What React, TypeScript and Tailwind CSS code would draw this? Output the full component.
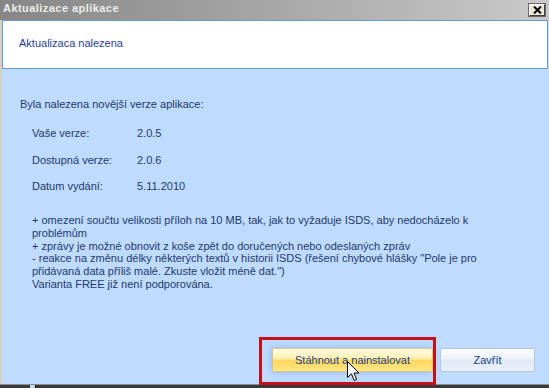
export default function App() {
  const rows = [
    ["Vaše verze:", "2.0.5"],
    ["Dostupná verze:", "2.0.6"],
    ["Datum vydání:", "5.11.2010"],
  ];

  const notes = [
    "+ omezení součtu velikosti příloh na 10 MB, tak, jak to vyžaduje ISDS, aby nedocházelo k",
    "problémům",
    "+ zprávy je možné obnovit z koše zpět do doručených nebo odeslaných zpráv",
    "- reakce na změnu délky některých textů v historii ISDS (řešení chybové hlášky \"Pole je pro",
    "přidávaná data příliš malé. Zkuste vložit méně dat.\")",
    "Varianta FREE již není podporována.",
  ];

  return (
    <div className="relative h-[388px] w-[549px] overflow-hidden bg-[#3a3a3a] font-['Liberation_Sans',Arial,sans-serif] text-[11px] leading-[13px]">
      <div className="flex h-[385px] flex-col border-b border-[#8e8e8e]">
        {/* title bar */}
        <div className="flex h-[20px] shrink-0 items-start justify-between bg-gradient-to-r from-[#868686] to-[#cacaca] pl-[3px] pr-[4px]">
          <span className="pt-[2px] text-[11px] font-bold tracking-[0.45px] text-[#ececec]">
            Aktualizace aplikace
          </span>
          <button className="mt-[4px] flex h-[12px] w-[16px] items-center justify-center border border-t-white border-l-white border-r-[#404040] border-b-[#404040] bg-[#ece9d8] outline outline-1 outline-[#6a6a6a]">
            <svg width="9" height="8" viewBox="0 0 9 8">
              <path d="M1 0.5 L8 7.5 M8 0.5 L1 7.5" stroke="#000" strokeWidth="2" />
            </svg>
          </button>
        </div>

        {/* body */}
        <div className="flex flex-1 flex-col border-l-2 border-[#d4d1cb] bg-[#bfdbff]">
          <div className="mr-[1px] h-[49px] shrink-0 border border-[#6a9bd8] bg-white pl-[16px] pt-[16px] text-[#1f3f9c]">
            Aktualizaca nalezena
          </div>

          <div className="mt-[29px] pl-[18px] text-[#1d3a6c]">Byla nalezena novější verze aplikace:</div>

          <div className="mt-[16px] flex flex-col gap-[13.5px] pl-[30px] text-[#1d3a6c]">
            {rows.map(([label, value]) => (
              <div key={label} className="flex">
                <span className="w-[105px]">{label}</span>
                <span>{value}</span>
              </div>
            ))}
          </div>

          <div className="mt-[21px] flex flex-col pl-[30px] leading-[12.8px] text-[#1d3a6c]">
            {notes.map((line) => (
              <span key={line} className="whitespace-nowrap">
                {line}
              </span>
            ))}
          </div>

          <div className="mt-auto flex justify-end gap-[7px] pb-[12px] pr-[14px]">
            <button className="h-[24px] w-[161px] rounded-[2px] border border-[#d6c68c] bg-[linear-gradient(to_bottom,#fffbe4_0%,#ffefaf_45%,#ffd75c_50%,#ffe487_100%)] text-[#15428b] shadow-[0_0_7px_rgba(70,110,170,0.35)]">
              Stáhnout a nainstalovat
            </button>
            <button className="h-[24px] w-[95px] rounded-[2px] border border-[#b4c6de] bg-[linear-gradient(to_bottom,#fafcff_0%,#eef3fb_45%,#dfe8f5_50%,#eaf0f9_100%)] text-[#15428b]">
              Zavřít
            </button>
          </div>
        </div>
      </div>

      {/* annotation highlight */}
      <div className="absolute left-[259px] top-[337px] h-[48px] w-[177px] border-[3px] border-[#c3111c]" />

      {/* mouse pointer */}
      <svg className="absolute left-[347px] top-[361px]" width="13" height="21" viewBox="0 0 13 21">
        <path
          d="M0.5 0.5 L0.5 16.5 L4.5 12.8 L7.2 19.5 L9.6 18.5 L7 12 L12 12 Z"
          fill="#fff"
          stroke="#000"
          strokeWidth="1"
          strokeLinejoin="miter"
        />
      </svg>

      {/* taskbar remnant */}
      <div className="absolute left-[30px] top-[385px] h-[3px] w-[5px] bg-[#c9d9ef]" />
      <div className="absolute left-[35px] top-[385px] h-[3px] w-[1px] bg-black" />
    </div>
  );
}
